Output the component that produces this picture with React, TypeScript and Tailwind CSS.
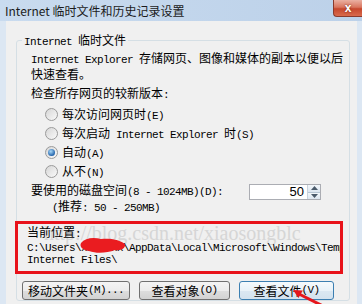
import React from 'react';

const mono = "font-['Liberation_Mono','Noto_Sans_CJK_SC',monospace] text-[11px] tracking-[-0.6px] whitespace-pre";

function Mixed({ text }: { text: string }) {
  const parts = text.split(/([\x20-\x7e]+)/).filter(Boolean);
  return (
    <>
      {parts.map((p, i) =>
        /^[\x20-\x7e]+$/.test(p) ? <span key={i} className={mono}>{p}</span> : <span key={i}>{p}</span>
      )}
    </>
  );
}

function Radio({ checked }: { checked?: boolean }) {
  return (
    <span className="w-[13px] h-[13px] shrink-0 rounded-full border border-[#9a9a9a] bg-gradient-to-br from-[#d6d6d6] to-[#fafafa] flex items-center justify-center">
      {checked && <span className="w-[7px] h-[7px] rounded-full bg-[radial-gradient(circle_at_40%_35%,#a8d8f8,#1a5ca6_75%)]" />}
    </span>
  );
}

function Btn({ label, w, focus }: { label: string; w: string; focus?: boolean }) {
  return (
    <div
      className={
        'h-[19px] rounded-[3px] border flex items-center justify-center leading-[17px] ' +
        w +
        (focus
          ? ' border-[#3c7fb1] bg-[linear-gradient(#f5fafd,#e9f2f8_50%,#dbe8f2_50%,#d3e2ee)]'
          : ' border-[#707070] bg-[linear-gradient(#f4f4f4,#ececec_50%,#dedede_50%,#d2d2d2)]')
      }
    >
      <Mixed text={label} />
    </div>
  );
}

const radios = ['每次访问网页时(E)', '每次启动 Internet Explorer 时(S)', '自动(A)', '从不(N)'];

export default function App() {
  return (
    <div className="w-[362px] h-[304px] overflow-hidden relative flex flex-col bg-[#dce7f3] text-[12px] text-black font-['Noto_Sans_CJK_SC',sans-serif]">
      <div className="h-[21px] flex items-start bg-gradient-to-r from-[#c9dbef] to-[#bcd1e9]">
        <div className="pl-[5px] leading-[22px] text-[12px] text-[#1b1b1b]">Internet 临时文件和历史记录设置</div>
        <div className="ml-auto w-[29px] h-[17px] rounded-bl-[4px] border border-t-0 border-r-0 border-[#8a3a2c] bg-[linear-gradient(#eab0a2,#d9765f_45%,#c6472d_55%,#d96a4c)] flex items-center justify-center">
          <span className="text-white font-bold text-[12px] leading-[12px] font-['Liberation_Sans',sans-serif] [text-shadow:0_0_2px_#6b1d10]">x</span>
        </div>
      </div>

      <div className="flex-1 ml-[6px] mr-[5px] bg-[#f0f0f0] pt-[19px] pl-[10px] pr-[7px]">
        <div className="h-[261px] border border-[#d5dfe5] rounded-[3px] pl-[14px] flex flex-col">
          <div className="-mt-[8px] -ml-[9px] self-start px-[2px] bg-[#f0f0f0] leading-[14px]">
            <Mixed text="Internet 临时文件" />
          </div>
          <div className="mt-[2px] leading-[13px] whitespace-nowrap">
            <Mixed text="Internet Explorer 存储网页、图像和媒体的副本以便以后" />
          </div>
          <div className="leading-[13px]">快速查看。</div>
          <div className="mt-[6px] leading-[13px]">
            <Mixed text="检查所存网页的较新版本:" />
          </div>
          <div className="mt-[3px] flex flex-col">
            {radios.map((r, i) => (
              <div key={r} className="h-[19px] ml-[14px] flex items-center gap-[4px]">
                <Radio checked={i === 2} />
                <span className="leading-[14px]">
                  <Mixed text={r} />
                </span>
              </div>
            ))}
          </div>
          <div className="mt-[2px] flex items-start">
            <div className="flex flex-col">
              <div className="leading-[14px]">
                <Mixed text="要使用的磁盘空间(8 - 1024MB)(D):" />
              </div>
              <div className="leading-[14px] ml-[21px]">
                <Mixed text="(推荐: 50 - 250MB)" />
              </div>
            </div>
            <div className="ml-auto mr-[28px] mt-[1px] w-[72px] h-[16px] border border-[#abadb3] bg-white flex">
              <div className="flex-1 text-right pr-[3px] text-[13px] leading-[14px] font-['Liberation_Sans',sans-serif]">50</div>
              <div className="w-[13px] flex flex-col border-l border-[#c9d3dc]">
                <div className="flex-1 bg-[linear-gradient(#f3f7fb,#dce6f0)] flex items-center justify-center border-b border-[#b7c6d4]">
                  <svg width="7" height="4" viewBox="0 0 7 4"><path d="M0 4 L3.5 0 L7 4 Z" fill="#4a5a6a" /></svg>
                </div>
                <div className="flex-1 bg-[linear-gradient(#f3f7fb,#dce6f0)] flex items-center justify-center">
                  <svg width="7" height="4" viewBox="0 0 7 4"><path d="M0 0 L3.5 4 L7 0 Z" fill="#4a5a6a" /></svg>
                </div>
              </div>
            </div>
          </div>

          <div className="relative mt-[6px] -ml-[16px] w-[328px] h-[56px] border-[3px] border-[#e8121a] overflow-hidden pl-[9px] pt-[1px]">
            <div className="absolute left-[26px] top-[-1px] text-[20px] leading-[20px] text-[#d6d6d6] whitespace-nowrap font-['Liberation_Serif',serif] pointer-events-none">
              http://blog.csdn.net/xiaosongblc
            </div>
            <div className="relative leading-[14px]">
              <Mixed text="当前位置:" />
            </div>
            <div className={'relative mt-[1px] leading-[12px] ' + mono}>{'C:\\Users\\xxxxxxx\\AppData\\Local\\Microsoft\\Windows\\Temporary'}</div>
            <div className={'relative leading-[12px] ' + mono}>{'Internet Files\\'}</div>
            <svg className="absolute left-[61px] top-[12px]" width="48" height="19" viewBox="0 0 48 19">
              <path
                d="M2 7 C6 2 14 1 22 3 C30 2 40 3 46 8 C47 12 42 15 36 14 C28 17 18 18 10 15 C4 14 0 11 2 7 Z"
                fill="#ea1c20"
              />
            </svg>
          </div>

          <div className="mt-[7px] -ml-[9px] flex gap-[9px]">
            <Btn label="移动文件夹(M)..." w="w-[108px]" />
            <Btn label="查看对象(O)" w="w-[91px]" />
            <Btn label="查看文件(V)" w="w-[95px]" focus />
          </div>
        </div>
      </div>

      <svg className="absolute left-[285px] top-[284px]" width="44" height="22" viewBox="0 0 44 22">
        <path d="M8 6 L13.5 14 L17.8 6.5 Z" fill="#e5161c" />
        <path d="M14 10 L42 24" stroke="#e5161c" strokeWidth="3" />
      </svg>
    </div>
  );
}
